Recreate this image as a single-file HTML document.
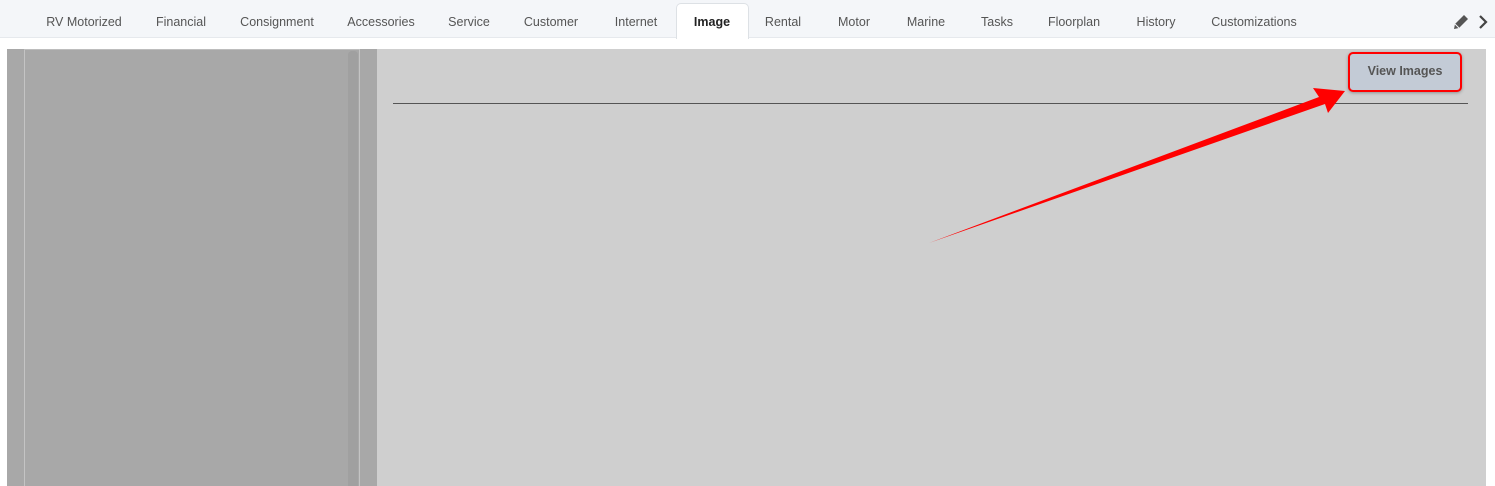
<!DOCTYPE html>
<html><head><style>
body{margin:0;width:1495px;height:486px;background:#fff;position:relative;overflow:hidden;font-family:"Liberation Sans",sans-serif;}
.bar{position:absolute;left:0;top:0;width:1495px;height:37px;background:#f4f6f9;border-bottom:1px solid #e6e9ed;}
.t{position:absolute;top:15px;font-size:12.5px;color:#555;transform:translateX(-50%);white-space:nowrap;}
.act{position:absolute;left:676px;top:3px;width:71px;height:35px;background:#fff;border:1px solid #dde1e5;border-bottom:none;border-radius:5px 5px 0 0;}
</style></head><body>
<div class="bar"></div>
<div class="act"></div>
<div class="t" style="left:84px">RV Motorized</div>
<div class="t" style="left:181px">Financial</div>
<div class="t" style="left:277px">Consignment</div>
<div class="t" style="left:381px">Accessories</div>
<div class="t" style="left:469px">Service</div>
<div class="t" style="left:551px">Customer</div>
<div class="t" style="left:636px">Internet</div>
<div class="t" style="left:712px;font-weight:bold;color:#222">Image</div>
<div class="t" style="left:783px">Rental</div>
<div class="t" style="left:854px">Motor</div>
<div class="t" style="left:926px">Marine</div>
<div class="t" style="left:997px">Tasks</div>
<div class="t" style="left:1074px">Floorplan</div>
<div class="t" style="left:1156px">History</div>
<div class="t" style="left:1254px">Customizations</div>
<svg style="position:absolute;left:1450px;top:12px" width="40" height="20" viewBox="0 0 40 20">
<path d="M4 17 L5 12 L14 3 L18 7 L9 16 Z" fill="#555"/><path d="M5 12 L9 16" stroke="#f4f6f9" stroke-width="1"/>
<path d="M30 4 L36 10 L30 16" fill="none" stroke="#444" stroke-width="2.2"/>
</svg>
<div style="position:absolute;left:7px;top:49px;width:370px;height:437px;background:#a8a8a8"></div>
<div style="position:absolute;left:24px;top:49px;width:1px;height:437px;background:#c4c4c4"></div>
<div style="position:absolute;left:24px;top:49px;width:335px;height:1px;background:#bdbdbd"></div>
<div style="position:absolute;left:348px;top:51px;width:10px;height:435px;background:#a0a0a0;border-radius:4px 4px 0 0"></div>
<div style="position:absolute;left:359px;top:49px;width:1px;height:437px;background:#c4c4c4"></div>
<div style="position:absolute;left:377px;top:49px;width:1109px;height:437px;background:#cfcfcf"></div>
<div style="position:absolute;left:393px;top:103px;width:1075px;height:1px;background:#555"></div>
<svg style="position:absolute;left:0;top:0" width="1495" height="486">
<polygon points="929,243 1319,97 1313,88 1345,91 1328,113 1325,104" fill="#f00"/>
</svg>
<div style="position:absolute;left:1348px;top:52px;width:110px;height:36px;border:2px solid #f00;border-radius:5px;background:#c3cbd6;box-shadow:0 1px 3px rgba(0,0,0,.3)"></div>
<div style="position:absolute;left:1350px;top:64px;width:110px;text-align:center;font-size:12.5px;font-weight:bold;color:#555">View Images</div>
</body></html>
